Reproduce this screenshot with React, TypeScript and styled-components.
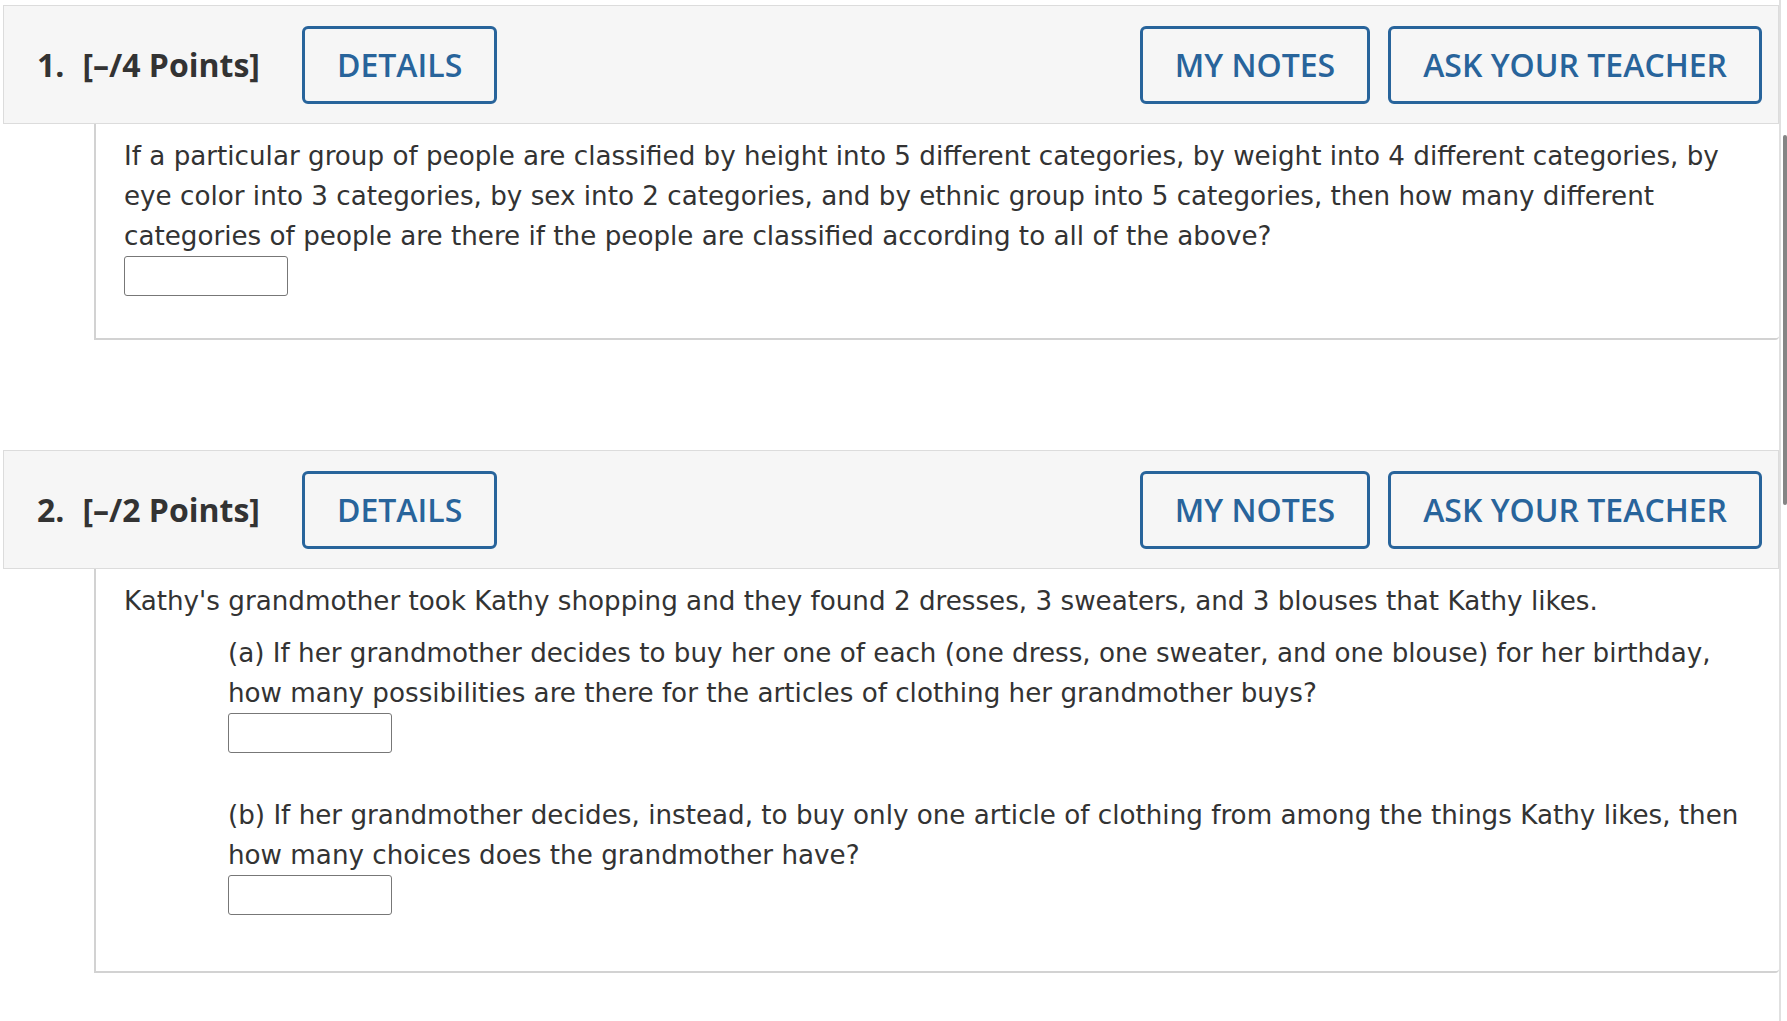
import styled, { createGlobalStyle } from "styled-components";

const GlobalStyle = createGlobalStyle`
    html, body {
        margin: 0;
        padding: 0;
        background: #ffffff;
    }
    body {
        font-family: "DejaVu Sans", Verdana, sans-serif;
        color: #333333;
        overflow: hidden;
    }
`;

type Part = {
    label: string;
    text: string;
};

type Question = {
    number: number;
    points: number;
    intro?: string;
    text?: string;
    parts?: Part[];
};

const questions: Question[] = [
    {
        number: 1,
        points: 4,
        text: "If a particular group of people are classified by height into 5 different categories, by weight into 4 different categories, by eye color into 3 categories, by sex into 2 categories, and by ethnic group into 5 categories, then how many different categories of people are there if the people are classified according to all of the above?",
    },
    {
        number: 2,
        points: 2,
        intro: "Kathy's grandmother took Kathy shopping and they found 2 dresses, 3 sweaters, and 3 blouses that Kathy likes.",
        parts: [
            {
                label: "(a)",
                text: "If her grandmother decides to buy her one of each (one dress, one sweater, and one blouse) for her birthday, how many possibilities are there for the articles of clothing her grandmother buys?",
            },
            {
                label: "(b)",
                text: "If her grandmother decides, instead, to buy only one article of clothing from among the things Kathy likes, then how many choices does the grandmother have?",
            },
        ],
    },
];

function App() {
    return (
        <>
            <GlobalStyle />
            <PageStyle>
                {questions.map((q) => (
                    <QuestionBlock key={q.number}>
                        <QuestionHeader>
                            <QuestionNumber>{q.number}.</QuestionNumber>
                            <QuestionPoints>{`[–/${q.points} Points]`}</QuestionPoints>
                            <OutlineButton $space={42}>DETAILS</OutlineButton>
                            <HeaderActions>
                                <OutlineButton>MY NOTES</OutlineButton>
                                <OutlineButton>ASK YOUR TEACHER</OutlineButton>
                            </HeaderActions>
                        </QuestionHeader>

                        <QuestionBody $bottom={q.parts ? 56 : 42}>
                            {q.text && (
                                <>
                                    <BodyText>{q.text}</BodyText>
                                    <AnswerBox type="text" />
                                </>
                            )}

                            {q.intro && <BodyText>{q.intro}</BodyText>}

                            {q.parts?.map((part, i) => (
                                <PartBlock key={part.label} $top={i === 0 ? 12 : 42}>
                                    <BodyText>{`${part.label} ${part.text}`}</BodyText>
                                    <AnswerBox type="text" />
                                </PartBlock>
                            ))}
                        </QuestionBody>
                    </QuestionBlock>
                ))}

                {/* scrollbar thumb on the right edge */}
                <ScrollThumb />
            </PageStyle>
        </>
    );
}

const PageStyle = styled.div`
    position: relative;
    box-sizing: border-box;
    width: 1781px;
    min-height: 1021px;
    padding: 5px 0 0 3px;
    border-right: 2px solid #e0e0e0;
    display: flex;
    flex-direction: column;
    gap: 110px;
`;

const QuestionBlock = styled.section`
    display: flex;
    flex-direction: column;
`;

const QuestionHeader = styled.div`
    box-sizing: border-box;
    height: 119px;
    display: flex;
    align-items: center;
    padding: 0 16px 0 33px;
    background: #f6f6f6;
    border: 1px solid #dcdcdc;
    font-family: "Open Sans", "Liberation Sans", sans-serif;
`;

const QuestionNumber = styled.span`
    font-size: 32px;
    font-weight: 700;
    color: #333333;
    margin-right: 18px;
`;

const QuestionPoints = styled.span`
    font-size: 32px;
    font-weight: 700;
    color: #333333;
`;

const OutlineButton = styled.button<{ $space?: number }>`
    box-sizing: border-box;
    height: 78px;
    margin-left: ${({ $space }) => $space ?? 0}px;
    padding: 0 32px;
    background: transparent;
    border: 3px solid #28649b;
    border-radius: 6px;
    color: #28649b;
    font-family: "Open Sans", "Liberation Sans", sans-serif;
    font-size: 32px;
    font-weight: 600;
    white-space: nowrap;
    cursor: pointer;
`;

const HeaderActions = styled.div`
    margin-left: auto;
    display: flex;
    gap: 18px;
`;

const QuestionBody = styled.div<{ $bottom: number }>`
    margin-left: 91px;
    padding: 12px 29px ${({ $bottom }) => $bottom}px 28px;
    border-left: 2px solid #d2d2d2;
    border-bottom: 2px solid #d2d2d2;
    border-bottom-right-radius: 4px;
`;

const BodyText = styled.p`
    margin: 0;
    font-size: 26.2px;
    line-height: 40px;
    color: #333333;
`;

const PartBlock = styled.div<{ $top: number }>`
    margin-top: ${({ $top }) => $top}px;
    padding-left: 104px;
`;

const AnswerBox = styled.input`
    display: block;
    box-sizing: border-box;
    width: 164px;
    height: 40px;
    margin: 0;
    padding: 0 8px;
    border: 1.5px solid #777777;
    border-radius: 3px;
    background: #ffffff;
    font-size: 22px;
    outline: none;
`;

const ScrollThumb = styled.div`
    position: absolute;
    top: 135px;
    right: -8px;
    width: 4px;
    height: 370px;
    border-radius: 3px;
    background: #858585;
`;

export default App;
